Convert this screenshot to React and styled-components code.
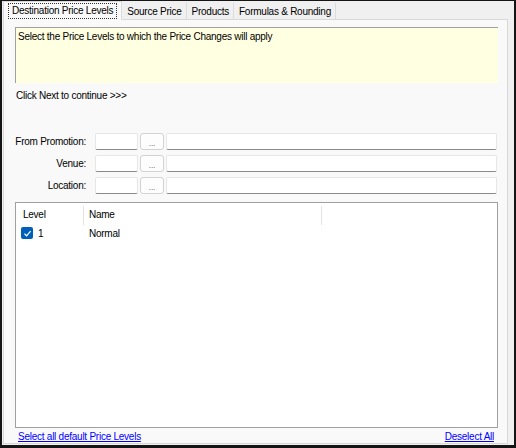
import React from "react";
import styled, { createGlobalStyle } from "styled-components";

const Global = createGlobalStyle`
  html, body { margin: 0; padding: 0; background: #ffffff; }
  * { box-sizing: border-box; }
  body {
    font-family: "Liberation Sans", Arial, sans-serif;
    font-size: 10px;
    letter-spacing: -0.25px;
    color: #000;
  }
`;

const Window = styled.div`
  width: 516px;
  height: 448px;
  border-style: solid;
  border-color: #151515;
  border-width: 1px 2px 3px 2px;
  background: #f0f0f0;
  display: flex;
  flex-direction: column;
`;

const TabStrip = styled.div`
  height: 18px;
  display: flex;
  align-items: flex-end;
  padding-left: 1px;
  position: relative;
  z-index: 1;
`;

const Tab = styled.div`
  height: ${(p) => (p.$active ? "19px" : "17px")};
  margin-bottom: ${(p) => (p.$active ? "-1px" : "0")};
  padding: 0 4px;
  display: flex;
  align-items: center;
  background: ${(p) => (p.$active ? "#f9f9f9" : "#f0f0f0")};
  border: 1px solid ${(p) => (p.$active ? "#d9d9d9" : "transparent")};
  border-bottom: none;
  border-right: 1px solid #dcdcdc;
  white-space: nowrap;
`;

const Focus = styled.span`
  border: 1px dotted #333;
  padding: 1px 3px;
  line-height: 12px;
`;

const Panel = styled.div`
  flex: 1;
  margin: 0 6px 1px 1px;
  background: #f9f9f9;
  border: 1px solid #d9d9d9;
  padding: 7px 9px 0 11px;
  display: flex;
  flex-direction: column;
  min-height: 0;
`;

const Hint = styled.div`
  height: 56px;
  background: #ffffe1;
  border-top: 1px solid #a0a0a0;
  border-left: 1px solid #a0a0a0;
  padding: 3px 2px;
  line-height: 12px;
`;

const Note = styled.div`
  margin-top: 7px;
  padding-left: 1px;
  line-height: 12px;
`;

const Fields = styled.div`
  margin-top: 31px;
  display: flex;
  flex-direction: column;
  gap: 5px;
`;

const FieldRow = styled.div`
  display: flex;
  align-items: center;
  height: 17px;
  padding-right: 1px;
`;

const Label = styled.div`
  flex: none;
  width: 72px;
  text-align: right;
  white-space: nowrap;
  padding-right: 1px;
  margin-right: 8px;
`;

const TextBox = styled.div`
  height: 17px;
  width: ${(p) => (p.$grow ? "auto" : "43px")};
  flex: ${(p) => (p.$grow ? "1" : "none")};
  background: #fff;
  border: 1px solid #e6e6e6;
  border-bottom: 1px solid #8a8a8a;
  border-radius: 2px;
`;

const DotsButton = styled.div`
  flex: none;
  width: 24px;
  height: 17px;
  margin: 0 2px;
  background: #fdfdfd;
  border: 1px solid #d2d2d2;
  border-radius: 3px;
  display: flex;
  align-items: flex-end;
  justify-content: center;
  font-size: 8px;
  letter-spacing: 0;
  line-height: 11px;
  color: #444;
`;

const List = styled.div`
  margin-top: 8px;
  flex: 1;
  min-height: 0;
  background: #fff;
  border: 1px solid #a0a0a0;
`;

const Grid = styled.div`
  display: grid;
  grid-template-columns: 68px 238px 1fr;
`;

const HeadCell = styled.div`
  height: 22px;
  display: flex;
  align-items: center;
  padding-left: ${(p) => p.$pad}px;
  position: relative;
  &::after {
    content: "";
    display: ${(p) => (p.$sep ? "block" : "none")};
    position: absolute;
    right: 0;
    top: 3px;
    bottom: 0;
    width: 1px;
    background: #e3e3e3;
  }
`;

const Cell = styled.div`
  height: 16px;
  display: flex;
  align-items: center;
  gap: 5px;
  padding-left: ${(p) => p.$pad}px;
`;

const Check = styled.span`
  width: 12px;
  height: 12px;
  border-radius: 2px;
  background: #005fb8;
  display: inline-flex;
  align-items: center;
  justify-content: center;
`;

const Links = styled.div`
  height: 15px;
  display: flex;
  justify-content: space-between;
  align-items: center;
  padding: 1px 4px 0 3px;
`;

const Link = styled.a`
  color: #0000ff;
  text-decoration: underline;
  cursor: pointer;
`;

const fields = ["From Promotion:", "Venue:", "Location:"];

export default function App() {
  return (
    <>
      <Global />
      <Window>
        <TabStrip>
          <Tab $active>
            <Focus>Destination Price Levels</Focus>
          </Tab>
          <Tab>Source Price</Tab>
          <Tab>Products</Tab>
          <Tab>Formulas &amp; Rounding</Tab>
        </TabStrip>
        <Panel>
          <Hint>Select the Price Levels to which the Price Changes will apply</Hint>
          <Note>Click Next to continue &gt;&gt;&gt;</Note>
          <Fields>
            {fields.map((f) => (
              <FieldRow key={f}>
                <Label>{f}</Label>
                <TextBox />
                <DotsButton>...</DotsButton>
                <TextBox $grow />
              </FieldRow>
            ))}
          </Fields>
          <List>
            <Grid>
              <HeadCell $pad={7} $sep>Level</HeadCell>
              <HeadCell $pad={5} $sep>Name</HeadCell>
              <HeadCell $pad={5} />
              <Cell $pad={5}>
                <Check>
                  <svg width="9" height="9" viewBox="0 0 9 9">
                    <path d="M1.5 4.8 L3.6 6.8 L7.6 2.2" fill="none" stroke="#fff" strokeWidth="1.2" />
                  </svg>
                </Check>
                1
              </Cell>
              <Cell $pad={5}>Normal</Cell>
              <Cell $pad={5} />
            </Grid>
          </List>
          <Links>
            <Link>Select all default Price Levels</Link>
            <Link>Deselect All</Link>
          </Links>
        </Panel>
      </Window>
    </>
  );
}
